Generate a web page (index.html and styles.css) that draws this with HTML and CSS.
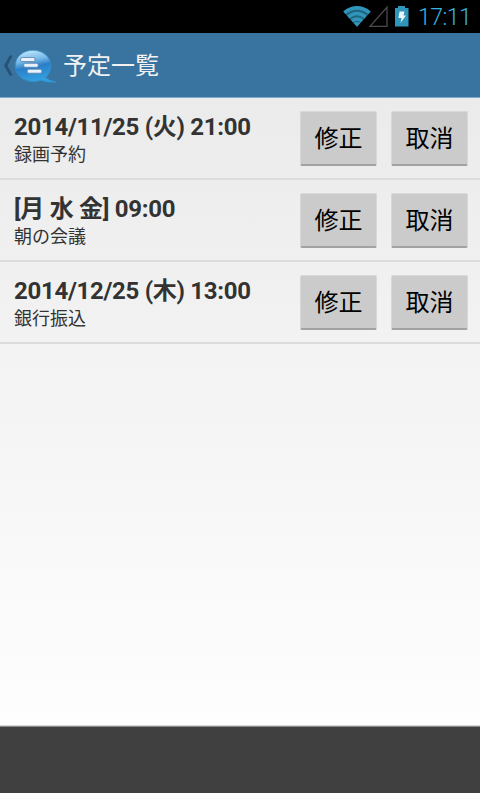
FILE: index.html
```html
<!DOCTYPE html>
<html lang="ja">
<head>
<meta charset="utf-8">
<title>予定一覧</title>
<link rel="stylesheet" href="styles.css">
</head>
<body>
<div class="screen">
  <div class="status">
    <svg class="status-icons" width="68" height="33" viewBox="0 0 68 33">
      <path d="M.3 11.800Q14 1.500 27.700 11.800L14 26.800Z" fill="#20637c"/>
      <g fill="none" stroke="#3095ba" stroke-width="3.600">
        <path d="M1.400 12.600Q14 3.200 26.600 12.600"/>
        <path d="M5.300 17Q14 10 22.700 17"/>
        <path d="M9 21Q14 17 19 21"/>
      </g>
      <path d="M14 26.800L10.600 23Q14 20.800 17.400 23Z" fill="#3095ba"/>
      <path d="M44 7.200V26.400H27Z" fill="none" stroke="#4b4b4b" stroke-width="1.300"/>
      <path d="M55 6h7v2h3.500v18.600H52V8h3Z" fill="#3095ba"/>
      <path d="M56.500 11.500h5l-1 4h2.500l-5.500 7.500 1-5h-3Z" fill="#e8f5fa"/>
    </svg>
    <span class="clock">17:11</span>
  </div>
  <header class="bar">
    <svg class="up" width="60" height="44" viewBox="0 0 60 44">
      <defs>
        <linearGradient id="bubble" x1="0" y1="0" x2=".25" y2="1">
          <stop offset="0" stop-color="#d5f1ff"/>
          <stop offset=".38" stop-color="#75b9e8"/>
          <stop offset=".58" stop-color="#2b7fca"/>
          <stop offset="1" stop-color="#319fe0"/>
        </linearGradient>
      </defs>
      <path d="M9.500 12.500H12.700L7.500 22.700 12.700 32.500H9.500L4 22.700Z" fill="#275273"/>
      <path d="M33 7.300C43 7.300 50.800 14 50.800 22.800C50.800 28 48.500 32 45.500 34.500Q50 38.100 56 39Q47 40 40.500 37.200C37 38.900 32.500 39 28.500 38C20.500 36.200 15.300 30.500 15.300 22.800C15.300 14 23 7.300 33 7.300Z" fill="url(#bubble)" stroke="#348fc9" stroke-width=".7"/>
      <g fill="#e7f2fc" stroke="#5a7fa8" stroke-width=".8">
        <rect x="20.500" y="14.500" width="14.500" height="4" rx="1.500"/>
        <rect x="23.700" y="20.300" width="14.500" height="4" rx="1.500"/>
        <rect x="27.300" y="26.200" width="14.500" height="4" rx="1.500"/>
      </g>
    </svg>
    <h1 class="title">予定一覧</h1>
  </header>
  <main class="list">
    <div class="row">
      <div class="info"><div class="when">2014/11/25 (火) 21:00</div><div class="what">録画予約</div></div>
      <button class="btn">修正</button><button class="btn">取消</button>
    </div>
    <div class="row">
      <div class="info"><div class="when">[月 水 金] 09:00</div><div class="what">朝の会議</div></div>
      <button class="btn">修正</button><button class="btn">取消</button>
    </div>
    <div class="row">
      <div class="info"><div class="when">2014/12/25 (木) 13:00</div><div class="what">銀行振込</div></div>
      <button class="btn">修正</button><button class="btn">取消</button>
    </div>
  </main>
  <footer class="foot"></footer>
</div>
</body>
</html>
```
FILE: styles.css
```css
* { box-sizing: border-box; }
body { margin: 0; font-family: Roboto, "Noto Sans CJK JP", sans-serif; }
.screen { width: 480px; height: 793px; display: flex; flex-direction: column; overflow: hidden; }
.status { height: 33px; flex: none; background: #000; display: flex; justify-content: flex-end; padding-right: 9px; }
.status-icons { margin-right: 7px; }
.clock { color: #36b4e4; font-size: 23px; font-weight: 300; line-height: 35px; letter-spacing: -.5px; width: 53px; white-space: nowrap; }
.bar { height: 65px; flex: none; background: #3974a0; border-bottom: 1px solid #7daac9; display: flex; align-items: center; }
.up { flex: none; }
.title { margin: 2px 0 0 3px; color: #f2f2f2; font-size: 24px; font-weight: 400; line-height: 64px; }
.list { flex: 1; background: linear-gradient(#ebebeb, #fefefe); border-bottom: 1px solid #8c8c8c; box-shadow: inset 0 -1px #d5d5d5; }
.row { height: 82px; display: flex; align-items: flex-start; padding: 13px 12px 0 14px; border-bottom: 2px solid #dcdcdc; }
.info { flex: 1; padding-top: 1px; color: #333; white-space: nowrap; }
.when { font-size: 24px; font-weight: 700; line-height: 30px; letter-spacing: -.29px; }
.what { font-size: 18px; line-height: 26px; }
.btn { width: 77px; height: 55px; margin: 0 0 0 14px; padding: 1px 0 0; flex: none; border: 1px solid #d8d8d8; border-bottom: 2px solid #a2a2a2; border-radius: 2px; background: #cbcbcb; color: #000; font: 400 24px/1 Roboto, "Noto Sans CJK JP", sans-serif; }
.foot { height: 66px; flex: none; background: #404040; }
```
